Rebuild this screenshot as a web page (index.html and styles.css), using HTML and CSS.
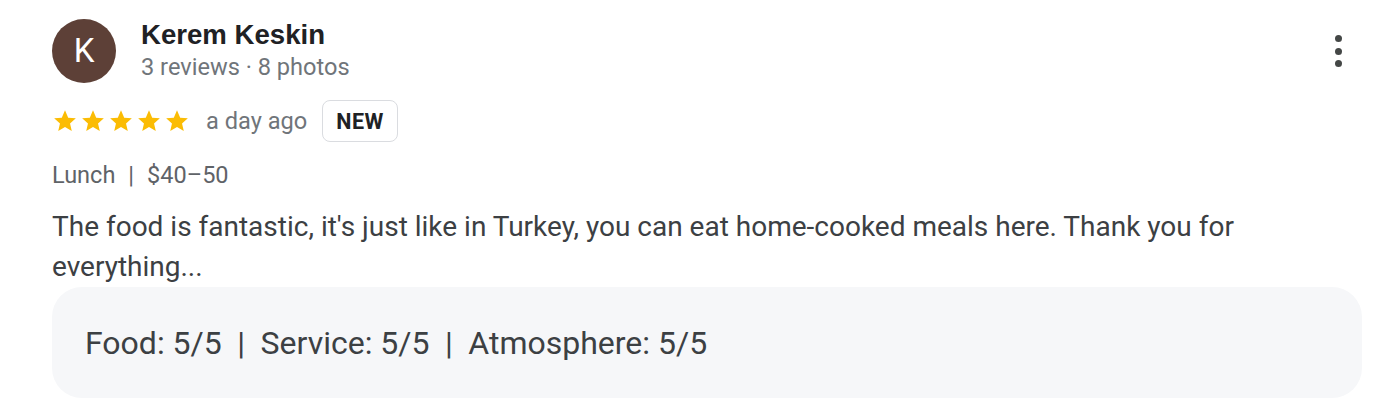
FILE: index.html
```html
<!DOCTYPE html>
<html>
<head>
<meta charset="utf-8">
<link rel="stylesheet" href="styles.css">
</head>
<body>
<div class="review">
  <div class="header">
    <div class="avatar">K</div>
    <div class="who">
      <div class="name">Kerem Keskin</div>
      <div class="meta">3 reviews · 8 photos</div>
    </div>
    <div class="more">
      <span class="dot"></span><span class="dot"></span><span class="dot"></span>
    </div>
  </div>
  <div class="rating-row">
    <div class="stars">
      <svg viewBox="0 0 24 24" class="star"><path d="M12 2l2.95 6.9 7.05.6-5.35 4.75 1.6 7.05L12 17.6l-6.25 3.7 1.6-7.05L2 9.5l7.05-.6z"/></svg>
      <svg viewBox="0 0 24 24" class="star"><path d="M12 2l2.95 6.9 7.05.6-5.35 4.75 1.6 7.05L12 17.6l-6.25 3.7 1.6-7.05L2 9.5l7.05-.6z"/></svg>
      <svg viewBox="0 0 24 24" class="star"><path d="M12 2l2.95 6.9 7.05.6-5.35 4.75 1.6 7.05L12 17.6l-6.25 3.7 1.6-7.05L2 9.5l7.05-.6z"/></svg>
      <svg viewBox="0 0 24 24" class="star"><path d="M12 2l2.95 6.9 7.05.6-5.35 4.75 1.6 7.05L12 17.6l-6.25 3.7 1.6-7.05L2 9.5l7.05-.6z"/></svg>
      <svg viewBox="0 0 24 24" class="star"><path d="M12 2l2.95 6.9 7.05.6-5.35 4.75 1.6 7.05L12 17.6l-6.25 3.7 1.6-7.05L2 9.5l7.05-.6z"/></svg>
    </div>
    <span class="when">a day ago</span>
    <span class="badge">NEW</span>
  </div>
  <div class="tags">Lunch<span class="sep">|</span>$40–50</div>
  <p class="text">The food is fantastic, it's just like in Turkey, you can eat home-cooked meals here. Thank you for everything...</p>
  <div class="scores">Food: 5/5<span class="bar">|</span>Service: 5/5<span class="bar">|</span>Atmosphere: 5/5</div>
</div>
</body>
</html>
```
FILE: styles.css
```css
html, body {
  margin: 0;
  padding: 0;
  background: #ffffff;
}
body {
  font-family: Roboto, "Noto Sans", Arial, sans-serif;
  color: #3c4043;
}
.review {
  padding: 19px 22px 0 52px;
}
.header {
  display: flex;
  align-items: flex-start;
}
.avatar {
  width: 64px;
  height: 64px;
  border-radius: 50%;
  background: #5d4037;
  color: #ffffff;
  font-size: 33px;
  line-height: 64px;
  text-align: center;
  flex: none;
}
.who {
  margin-left: 25px;
  flex: 1;
  padding-top: 1px;
}
.name {
  font-family: "Liberation Sans", Arial, sans-serif;
  font-size: 27.6px;
  font-weight: 700;
  color: #202124;
  line-height: 30px;
}
.meta {
  font-size: 23.6px;
  color: #70757a;
  line-height: 34px;
}
.more {
  display: flex;
  flex-direction: column;
  align-items: center;
  gap: 5.5px;
  padding-top: 16px;
  width: 7px;
  margin-right: 20px;
}
.dot {
  width: 7px;
  height: 7px;
  border-radius: 50%;
  background: #444746;
}
.rating-row {
  display: flex;
  align-items: center;
  margin-top: 16px;
  height: 42px;
}
.stars {
  display: flex;
  gap: 2px;
}
.star {
  width: 26px;
  height: 26px;
  fill: #fbbc04;
}
.when {
  font-size: 23.6px;
  color: #70757a;
  margin-left: 16px;
}
.badge {
  margin-left: 15px;
  border: 1.5px solid #dadce0;
  border-radius: 8px;
  height: 42px;
  box-sizing: border-box;
  padding: 0 13px;
  display: flex;
  align-items: center;
  font-size: 21.5px;
  font-weight: 700;
  color: #202124;
  letter-spacing: 0.5px;
}
.tags {
  margin-top: 17px;
  font-size: 23.5px;
  color: #5f6368;
  line-height: 32px;
}
.sep {
  margin: 0 13px;
}
.text {
  margin: 16px 0 0 0;
  font-size: 28px;
  line-height: 40px;
  color: #3c4043;
}
.scores {
  margin-top: 0;
  background: #f6f7f9;
  border-radius: 30px;
  height: 111px;
  display: flex;
  align-items: center;
  padding-left: 33px;
  font-size: 32px;
  color: #3c4043;
}
.bar {
  margin: 0 15.5px;
}
```
